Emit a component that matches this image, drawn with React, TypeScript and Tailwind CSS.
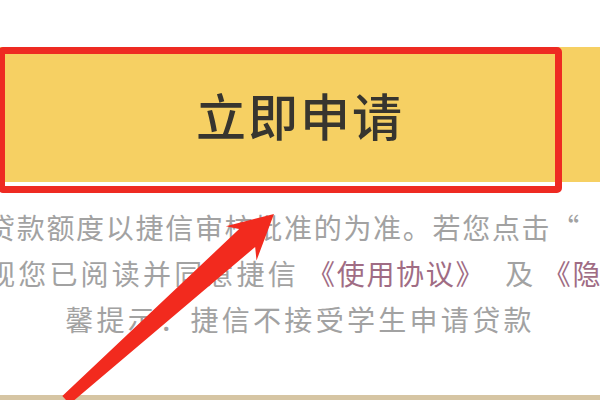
import React from 'react';

const RedArrow: React.FC = () => (
  <svg
    className="absolute inset-0 pointer-events-none"
    width={600}
    height={400}
    viewBox="0 0 600 400"
  >
    <g transform="translate(66 400) rotate(-41.8)">
      <polygon
        points="0,-5.5 243,-12 235,-23 279,0 235,23 243,12 0,5.5"
        fill="#f22a1e"
      />
    </g>
  </svg>
);

const App: React.FC = () => {
  return (
    <div className="relative w-[600px] h-[400px] overflow-hidden bg-white flex flex-col pt-[47px] font-['Noto_Sans_CJK_SC','Noto_Sans',sans-serif]">
      <button className="h-[135px] w-full shrink-0 bg-[#f6d063] flex items-center justify-center text-[50px] font-medium tracking-[2px] text-[#37352f]">
        立即申请
      </button>

      <div className="mt-[22px] text-[28px] leading-[46px] text-[#a2a2a2] whitespace-nowrap">
        <div className="-ml-[13px] tracking-[1.7px]">贷款额度以捷信审核批准的为准。若您点击“</div>
        <div className="-ml-[13px] tracking-[1.7px]">
          <span className="tracking-[3.2px]">视您已阅读并同意捷信</span>{' '}
          <span className="text-[#a06c84]">《使用协议》</span>
          <span className="ml-[12px]"> 及 </span>
          <span className="text-[#a06c84]">《隐私政策》</span>
        </div>
        <div className="text-center tracking-[3.3px]">馨提示：捷信不接受学生申请贷款</div>
      </div>

      <div className="mt-auto h-[5px] bg-[#d6c5a3]" />

      {/* annotation box drawn over the button */}
      <div className="absolute left-[-2px] top-[47px] w-[564px] h-[146px] border-[7px] border-[#ee2a22] rounded-[5px]" />
      <RedArrow />
    </div>
  );
};

export default App;
